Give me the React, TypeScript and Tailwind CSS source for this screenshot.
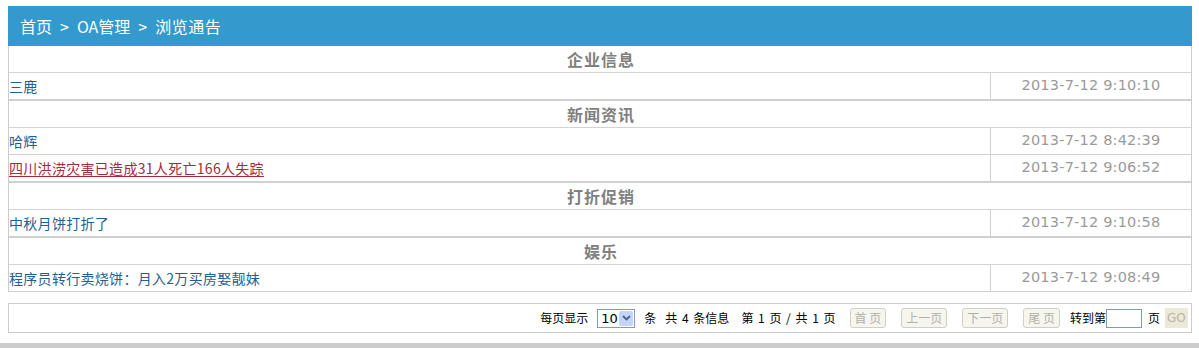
import React from 'react'

type Item = { title: string; time: string; hot?: boolean }
type Group = { name: string; items: Item[] }

const groups: Group[] = [
  { name: '企业信息', items: [{ title: '三鹿', time: '2013-7-12 9:10:10' }] },
  {
    name: '新闻资讯',
    items: [
      { title: '哈辉', time: '2013-7-12 8:42:39' },
      { title: '四川洪涝灾害已造成31人死亡166人失踪', time: '2013-7-12 9:06:52', hot: true },
    ],
  },
  { name: '打折促销', items: [{ title: '中秋月饼打折了', time: '2013-7-12 9:10:58' }] },
  { name: '娱乐', items: [{ title: '程序员转行卖烧饼：月入2万买房娶靓妹', time: '2013-7-12 9:08:49' }] },
]

const cjk = "font-['Noto_Sans_CJK_SC','Noto_Sans',sans-serif]"

const PagerButton: React.FC<{ label: string }> = ({ label }) => (
  <span className="inline-flex h-[20px] items-center rounded-[3px] border border-[#cfcfc4] bg-[#f6f6ef] px-[4px] text-[12px] text-[#b0b0a8] [word-spacing:0px]">
    {label}
  </span>
)

export default function App() {
  return (
    <div className={`min-h-[348px] bg-white ${cjk}`}>
      <div className="ml-[8px] mr-[7px] pt-[6px]">
        {/* Breadcrumb */}
        <div className="flex h-[40px] items-center bg-[#3499cd] pl-[12px] text-[16px] text-white">
          <span>首页</span>
          <span className="mx-[8px]">&gt;</span>
          <span>OA管理</span>
          <span className="mx-[8px]">&gt;</span>
          <span className="tracking-[0.5px]">浏览通告</span>
        </div>

        {/* Notice list */}
        <div className="border-x border-[#cccccc]">
          {groups.map((g, gi) => (
            <div key={g.name}>
              <div className="flex h-[27px] items-center justify-center border-b border-[#d3d3d3] pl-[2px] text-[16px] font-bold tracking-[1px] text-[#808080]">
                {g.name}
              </div>
              {g.items.map((it, ii) => {
                const groupEnd = ii === g.items.length - 1 && gi !== groups.length - 1
                return (
                  <div
                    key={it.title}
                    className={`flex ${groupEnd ? 'h-[28px] border-b-2' : 'h-[27px] border-b'} border-[#d0d0d0]`}
                  >
                    <div className="flex flex-1 items-center">
                      <a
                        className={`text-[14px] tracking-[0.3px] ${it.hot ? 'text-[#a8293b] underline underline-offset-2' : 'text-[#1f5f93]'}`}
                      >
                        {it.title}
                      </a>
                    </div>
                    <div className="flex w-[201px] items-center justify-center border-l border-[#d0d0d0] font-['DejaVu_Sans',sans-serif] text-[14.5px] tracking-[0.2px] text-[#9a9a9a]">
                      {it.time}
                    </div>
                  </div>
                )
              })}
            </div>
          ))}
        </div>

        {/* Pager */}
        <div className="mt-[11px] flex h-[30px] items-center justify-end border border-[#cccccc] pr-[3px] text-[12px] text-black [word-spacing:2px]">
          <span>每页显示</span>
          <span className="ml-[9px] flex h-[19px] w-[38px] items-center border border-[#7f9db9] bg-white">
            <span className="flex-1 pl-[3px] font-['DejaVu_Sans',sans-serif] text-[13px] leading-none">10</span>
            <span className="mr-[1px] flex h-[15px] w-[14px] items-center justify-center rounded-[2px] bg-[#c3d5fd]">
              <svg width="9" height="6" viewBox="0 0 9 6">
                <path d="M1 1 L4.5 4.5 L8 1" stroke="#4d6185" strokeWidth="1.8" fill="none" />
              </svg>
            </span>
          </span>
          <span className="ml-[9px]">条</span>
          <span className="ml-[9px]">共 4 条信息</span>
          <span className="ml-[12px]">第 1 页 / 共 1 页</span>
          <span className="ml-[14px]"><PagerButton label="首 页" /></span>
          <span className="ml-[15px]"><PagerButton label="上一页" /></span>
          <span className="ml-[15px]"><PagerButton label="下一页" /></span>
          <span className="ml-[15px]"><PagerButton label="尾 页" /></span>
          <span className="ml-[10px]">转到第</span>
          <span className="h-[19px] w-[36px] border border-[#7f9db9] bg-white" />
          <span className="ml-[6px]">页</span>
          <span className="ml-[5px] flex h-[20px] w-[23px] items-center overflow-hidden bg-[#ece9d8] pl-[2px] font-['DejaVu_Sans',sans-serif] text-[12px] text-[#b8b4a4]">
            GO
          </span>
        </div>
      </div>
      <div className="mt-[10px] h-[5px] bg-[#cccccc]" />
    </div>
  )
}
